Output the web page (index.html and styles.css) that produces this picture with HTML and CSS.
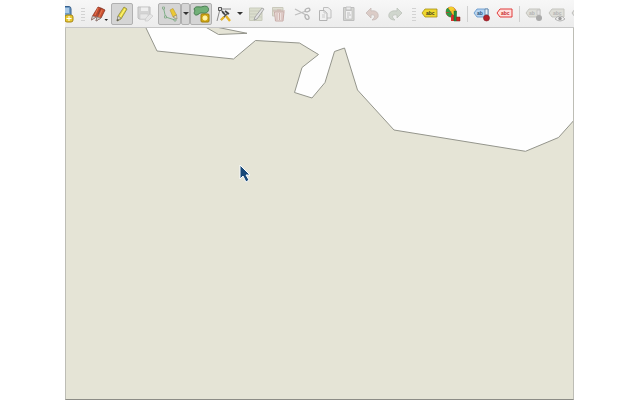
FILE: index.html
```html
<!DOCTYPE html>
<html lang="en">
<head>
<meta charset="utf-8">
<title>Map editor</title>
<link rel="stylesheet" href="styles.css">
</head>
<body>
<main class="app">
  <div class="toolbar" role="toolbar" aria-label="Editing">
    <button class="tool tool-cut-off" aria-label="New layer"><svg class="icon-part" viewBox="0 0 11 18"><path d="M-3 1.500H4Q6 1.500 6 4V15H-3Z" fill="#6f9bc6" stroke="#355f8d"/><path d="M0 3H4V8H0Z" fill="#a9c9e6"/><rect x="0" y="10" width="8" height="7" rx="2" fill="#e9c931" stroke="#a78614"/><path d="M4 11V16M1.500 13.500H6.500" stroke="#fff"/></svg></button>
    <span class="handle"></span>
    <button class="tool" aria-label="Current edits"><svg class="icon" viewBox="0 0 18 18"><path d="M1.500 15L2.500 11 8 2 11 3 6 12Z" fill="#c5482d" stroke="#8d3020" stroke-width=".7"/><path d="M6 16L7 12 11 3 15 5 11 13Z" fill="#cf5230" stroke="#7c2f20" stroke-width=".8"/><path d="M8 3L5 10M12 5L9 12" stroke="#e07a55"/><path d="M1.500 15L2.500 11 6 12ZM6 16L7 12 11 13Z" fill="#d4d1cb" stroke="#777" stroke-width=".5"/><path d="M14.500 14H18L16.200 16Z" fill="#222"/></svg></button>
    <button class="tool pressed" aria-label="Toggle editing"><svg class="icon" viewBox="0 0 18 18"><path d="M4 16L5 11 11 2 14 4 8 14Z" fill="#e6d83a" stroke="#8c8640" stroke-width=".8"/><path d="M12 4L7 12" stroke="#fff27c" stroke-width="1.200"/><path d="M4 16L5 11 8 13Z" fill="#dedbd0" stroke="#777" stroke-width=".6"/><path d="M4 16L4.500 14 6 15Z" fill="#444"/></svg></button>
    <button class="tool faded" aria-label="Save edits"><svg class="icon" viewBox="0 0 18 18"><path d="M2 2H14V14H3L2 13Z" fill="#c8c8c8" stroke="#aaa"/><path d="M5 2.500H12V6H5Z" fill="#eee"/><path d="M4 9H12V14H4Z" fill="#e4e4e4" stroke="#bbb" stroke-width=".6"/><path d="M9 16L10 13 14 9 17 11 12 16Z" fill="#e2e2e2" stroke="#bbb" stroke-width=".7"/></svg></button>
    <div class="split">
      <button class="tool tool-wide pressed" aria-label="Digitize with segment"><svg class="icon" viewBox="0 0 18 18"><path d="M2.500 3L4.500 12 14 15" fill="none" stroke="#7fb088"/><path d="M1.500 2H3.500V4H1.500ZM3.500 11H5.500V13H3.500ZM13 14H15V16H13Z" fill="#d9e4d4" stroke="#699570" stroke-width=".6"/><path d="M9 5L12 3.500 15.500 10 12 12Z" fill="#ebc833" stroke="#b89b35" stroke-width=".6"/><path d="M15.500 10L16 14 12 12Z" fill="#eee1bd" stroke="#847d69" stroke-width=".6"/></svg></button><button class="drop pressed" aria-label="Digitizing mode"></button>
    </div>
    <button class="tool tool-snug pressed" aria-label="Add polygon feature"><svg class="icon" viewBox="0 0 18 18"><path d="M2 4C4 0 7 3 11 1.500 16 0 18 4 15.500 7 12 10 10 6 6 9.500 3 11.500 1 8 3 6Z" fill="#72b078" stroke="#467c50"/><rect x="9" y="9" width="8" height="8" rx="1" fill="#d4aa16" stroke="#a17f08"/><circle cx="13" cy="13" r="2.200" fill="#fff0a0"/><path d="M13 10V16M10 13H16M11 11L15 15M15 11L11 15" stroke="#fff6ae" stroke-width=".7"/></svg></button>
    <div class="split">
      <button class="tool" aria-label="Vertex tool"><svg class="icon" viewBox="0 0 18 18"><path d="M2 16L5 4 16 4" fill="none" stroke="#8a8a8a"/><path d="M3.500 2.500H6.500V5.500H3.500Z" fill="#ddd" stroke="#333" stroke-width=".8"/><path d="M6 15L13 8M8 7L11 11" stroke="#555" stroke-width="1.600"/><path d="M6 15L9 12M11 11L15 16" stroke="#e8b527" stroke-width="2.400"/><path d="M10 6L14 9M7 6L9 9" fill="none" stroke="#444" stroke-width="1.600"/></svg></button><button class="drop drop-wide" aria-label="Vertex tool mode"></button>
    </div>
    <button class="tool faded" aria-label="Modify attributes"><svg class="icon" viewBox="0 0 18 18"><path d="M1.500 3H14V15.500H1.500Z" fill="#d2d6bf" stroke="#b9bda8"/><path d="M2 6H14M2 9H14M2 12H14" stroke="#b9bda8"/><path d="M6 15L7 12 14 3 16 4 9 14Z" fill="#ddd" stroke="#777" stroke-width=".8"/></svg></button>
    <button class="tool faded" aria-label="Delete selected"><svg class="icon" viewBox="0 0 18 18"><path d="M1.500 2.500H12V11H1.500Z" fill="#d7d6c4" stroke="#b9b8a5"/><path d="M2 5H12" stroke="#b9b8a5"/><path d="M3.500 7H13L12 16H4.500Z" fill="#ecdad6" stroke="#b78f89"/><path d="M2 6H14M6 5H10M6 8V15M8.500 8V15M11 8V15" stroke="#c09a94"/></svg></button>
    <button class="tool faded" aria-label="Cut features"><svg class="icon" viewBox="0 0 18 18"><path d="M1 4L12 10M1 10L12 6" stroke="#aaa" stroke-width="1.300"/><ellipse cx="13.500" cy="5" rx="2.500" ry="1.700" transform="rotate(-25 13.500 5)" fill="none" stroke="#999" stroke-width="1.200"/><ellipse cx="13" cy="12" rx="1.800" ry="2.500" transform="rotate(-30 13 12)" fill="none" stroke="#999" stroke-width="1.200"/></svg></button>
    <button class="tool faded" aria-label="Copy features"><svg class="icon" viewBox="0 0 18 18"><path d="M6.500 2.500H11L14 5V13H6.500Z" fill="#eee" stroke="#aaa"/><path d="M2.500 5.500H7L10 8V15.500H2.500Z" fill="#f1f1f1" stroke="#999"/><path d="M7 6V8H10M5 10H8M5 12H8" fill="none" stroke="#bbb"/></svg></button>
    <button class="tool faded" aria-label="Paste features"><svg class="icon" viewBox="0 0 18 18"><path d="M3.500 2.500H14V15.500H3.500Z" fill="#c8c9c4" stroke="#aaa"/><path d="M5.500 5.500H12V14H5.500Z" fill="#f1f1f1" stroke="#aaa" stroke-width=".7"/><path d="M6 2H11V5H6Z" fill="#e7e7e7" stroke="#999" stroke-width=".7"/><path d="M7 8H10M7 10H11M7 12H9" stroke="#aaa"/></svg></button>
    <button class="tool faded" aria-label="Undo"><svg class="icon" viewBox="0 0 18 18"><path d="M3 8L8 3V6C13 5 16 8 15 12 14 14 12 15 9 15 13 12 12 9 8 10V13Z" fill="#d3bdb6" stroke="#b5a5a0" stroke-width=".8"/></svg></button>
    <button class="tool faded" aria-label="Redo"><svg class="icon" viewBox="0 0 18 18"><path d="M16 8L11 3V6C5 5 2 8 3 12 4 14 6 15 9 15 5 12 6 9 11 10V13Z" fill="#c3cbbf" stroke="#a6aea3" stroke-width=".8"/></svg></button>
    <span class="handle handle-spaced"></span>
    <button class="tool tool-snug" aria-label="Layer labels"><svg class="icon" viewBox="0 0 18 18"><path d="M1 8L4 4H16V12H4Z" fill="#efd82e" stroke="#a69116" stroke-width=".8"/><text class="tag" x="5" y="10">abc</text></svg></button>
    <button class="tool" aria-label="Layer diagrams"><svg class="icon" viewBox="0 0 18 18"><circle cx="7" cy="7" r="5" fill="#df3025" stroke="#853126" stroke-width=".5"/><path d="M7 7L4 3Q8 0 11 4Z" fill="#f3ce2b"/><path d="M7 7L11 4Q13 8 10 11Z" fill="#f3ce2b"/><path d="M7 7L2 7Q2 3 4 3ZM7 7L9 12Q4 13 2 8Z" fill="#2d9a43"/><path d="M7 10H10V16H7Z" fill="#d8322a"/><path d="M10 6H12.500V16H10Z" fill="#208b40" stroke="#176329" stroke-width=".5"/><path d="M12.500 12H16V16H12.500Z" fill="#cc2822" stroke="#6e241d" stroke-width=".5"/></svg></button>
    <span class="separator"></span>
    <button class="tool" aria-label="Pin labels"><svg class="icon" viewBox="0 0 18 18"><path d="M1 8L4 4H15V12H4Z" fill="#b7d5f3" stroke="#5c91c7" stroke-width=".8"/><text class="tag tag-blue" x="4" y="10">ab</text><path d="M12 4H15V10H12Z" fill="#e5eef7" stroke="#4c7299" stroke-width=".7"/><circle cx="13.500" cy="13" r="3" fill="#b6222b" stroke="#7d1c25" stroke-width=".6"/></svg></button>
    <button class="tool" aria-label="Show unplaced labels"><svg class="icon" viewBox="0 0 18 18"><path d="M1 8L4 4H16V12H4Z" fill="#ffe0de" stroke="#e13a3a"/><text class="tag tag-red" x="5" y="10">abc</text></svg></button>
    <span class="separator"></span>
    <button class="tool faded" aria-label="Move pinned labels"><svg class="icon" viewBox="0 0 18 18"><path d="M1 8L4 4H15V12H4Z" fill="#d6d6ce" stroke="#b3b3ab"/><text class="tag tag-gray" x="4" y="10">ab</text><path d="M12 5H15V10H12Z" fill="#ddd" stroke="#aaa" stroke-width=".7"/><circle cx="14" cy="13" r="3" fill="#8d8d8d"/></svg></button>
    <button class="tool faded" aria-label="Show or hide labels"><svg class="icon" viewBox="0 0 18 18"><path d="M1 8L4 4H16V12H4Z" fill="#d6d6ce" stroke="#b3b3ab"/><text class="tag tag-gray" x="5" y="10">abc</text><path d="M7 14Q12 8 17 14 12 18 7 14Z" fill="#eee" stroke="#888" stroke-width=".8"/><circle cx="12" cy="13.500" r="1.700" fill="#777"/></svg></button>
    <button class="tool faded" aria-label="Move label"><svg class="icon" viewBox="0 0 18 18"><path d="M1 8L4 4H15V12H4Z" fill="#d6d6ce" stroke="#aaa"/></svg></button>
  </div>
  <section class="canvas" aria-label="Map canvas">
    <svg class="map" viewBox="66 28 508 371" preserveAspectRatio="xMinYMin slice">
      <path class="sea" d="M145 26L146 28 157 51 233.500 59 255.500 40.500 299.500 43 318.500 54.500 302 67.500 294.500 92.500 312 98 325 82.500 334.500 51.500 344.500 48 357.500 90 394 130 525.500 151.300 558.500 137.500 576 118V26Z"/>
      <path class="land" d="M202 25L218.500 34.500 247 33.300 211 26Z"/>
      <path class="pointer" d="M240 165V179L243 176 246 182 249 180 246 175H250Z"/>
    </svg>
  </section>
</main>
</body>
</html>
```
FILE: styles.css
```css
* {
  box-sizing: border-box;
}

body {
  margin: 0;
  padding: 0 66px 0 65px;
  background: #fff;
  font-family: "Liberation Sans", sans-serif;
}

.app {
  display: flex;
  flex-direction: column;
  height: 100vh;
}

.toolbar {
  display: flex;
  flex: none;
  align-items: center;
  gap: 1px;
  height: 28px;
  overflow: hidden;
  background: linear-gradient(#f7f7f7, #ececec);
  border-bottom: 1px solid #c6c6c6;
}

.tool,
.drop {
  display: flex;
  flex: none;
  align-items: center;
  justify-content: center;
  width: 22px;
  height: 22px;
  padding: 0;
  border: 1px solid transparent;
  background: none;
}

.tool-wide {
  width: 23px;
}

.tool-snug {
  margin-left: -1px;
}

.tool-cut-off {
  width: 11px;
  justify-content: flex-start;
  border: 0;
}

.pressed {
  background: #d5d5d5;
  border-color: #b0b0b0;
  border-radius: 2px;
}

.split {
  display: flex;
  flex: none;
}

.split:has(.tool-wide) {
  margin-left: 1px;
}

.drop {
  width: 9px;
}

.drop-wide {
  width: 10px;
}

.drop::after {
  content: "";
  border: 3px solid transparent;
  border-top-color: #333;
  border-bottom: 0;
}

.icon {
  flex: none;
  width: 18px;
  height: 18px;
}

.icon-part {
  flex: none;
  width: 11px;
  height: 18px;
}

.faded .icon {
  opacity: 0.7;
}

.tag {
  font-size: 5px;
  font-weight: bold;
  fill: #3c3a20;
}

.tag-blue {
  fill: #29517a;
}

.tag-red {
  fill: #c92929;
}

.tag-gray {
  fill: #999;
}

.handle {
  flex: none;
  width: 4px;
  height: 14px;
  margin: 0 2px 0 4px;
  background: radial-gradient(circle, #d2d2d2 1px, transparent 1px) 0 0 / 2px 3px;
}

.handle-spaced {
  margin: 0 3px 0 5px;
}

.separator {
  flex: none;
  width: 5px;
  height: 16px;
  background: linear-gradient(#d0d0d0, #d0d0d0) center / 1px 100% no-repeat;
}

.canvas {
  flex: 1;
  min-height: 0;
  background: #e5e4d6;
  border: 1px solid #bdbdb5;
  border-top: 0;
  border-bottom-color: #8c8c86;
}

.map {
  display: block;
  width: 100%;
  height: 100%;
}

.sea {
  fill: #fefefe;
  stroke: #94958c;
}

.land {
  fill: #e5e4d6;
  stroke: #94958c;
}

.pointer {
  fill: #174878;
  stroke: #f8fafc;
  stroke-width: 1;
}
```
